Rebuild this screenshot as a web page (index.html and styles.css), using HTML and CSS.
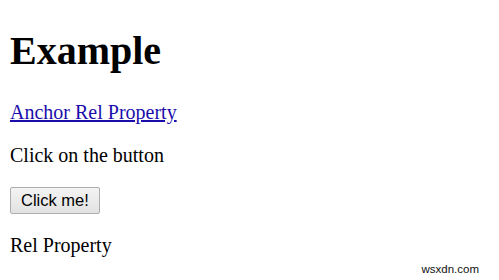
FILE: index.html
```html
<!DOCTYPE html>
<html lang="en">
<head>
    <meta charset="UTF-8">
    <title>Example</title>
    <link rel="stylesheet" href="styles.css">
</head>
<body>
    <h1>Example</h1>
    <a href="#" rel="nofollow">Anchor Rel Property</a>
    <p>Click on the button</p>
    <button class="demo-button">Click me!</button>
    <p class="result">Rel Property</p>

    <div class="watermark">wsxdn.com</div>
</body>
</html>
```

FILE: styles.css
```css
body {
    margin: 10px;
    font-family: "Liberation Serif", "Times New Roman", serif;
    font-size: 20px;
    color: #000;
    background: #fff;
}

h1 {
    font-size: 40px;
    margin: 17px 0 26.8px;
}

a {
    color: #1a0dab;
}

p {
    margin: 20px 0;
}

.demo-button {
    font-family: "Liberation Sans", Arial, sans-serif;
    font-size: 16.5px;
    padding: 1px 10px;
    height: 27px;
    color: #000;
    background: linear-gradient(#f3f3f3, #e2e2e2);
    border: 1px solid #adadad;
    border-radius: 2px;
}

.result {
    margin-top: 20px;
}

.watermark {
    position: absolute;
    right: 20px;
    bottom: 5px;
    font-family: "Liberation Sans", Arial, sans-serif;
    font-size: 11.5px;
    color: #111;
}
```
